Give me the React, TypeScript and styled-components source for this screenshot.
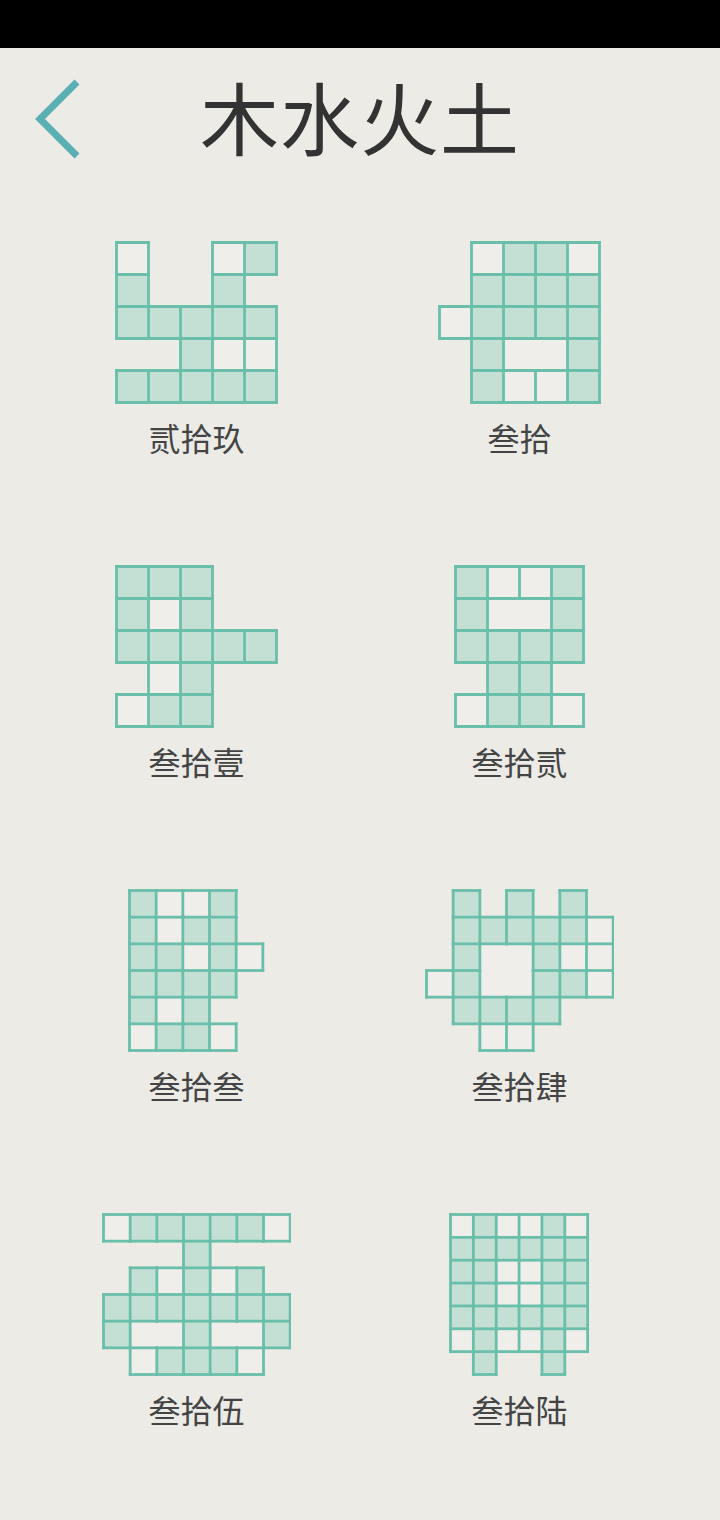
import styled, { createGlobalStyle } from "styled-components";

const GlobalStyle = createGlobalStyle`
  html, body {
    margin: 0;
    padding: 0;
    background: #ecebe6;
  }
  body {
    font-family: "Noto Sans CJK SC", "Noto Sans", sans-serif;
  }
`;

const Page = styled.div`
  width: 720px;
  min-height: 1520px;
  background: #ecebe6;
`;

const StatusBar = styled.div`
  height: 48px;
  background: #000;
`;

const Header = styled.header`
  position: relative;
  height: 144px;
  display: flex;
  align-items: center;
  justify-content: center;
`;

const BackBtn = styled.button`
  position: absolute;
  left: 31px;
  top: 29px;
  width: 60px;
  height: 84px;
  padding: 0;
  background: transparent;
  border: none;
  display: flex;
  align-items: center;
  justify-content: center;
`;

const Title = styled.h1`
  margin: 0 0 10px 0;
  font-size: 79px;
  font-weight: 400;
  letter-spacing: 1px;
  line-height: 1;
  color: #333333;
`;

const PuzzleList = styled.div`
  display: grid;
  grid-template-columns: 323px 323px;
  row-gap: 112px;
  padding: 50px 37px 0 35px;
`;

const Item = styled.div`
  display: flex;
  flex-direction: column;
  align-items: center;
`;

const Board = styled.div`
  height: 162px;
  display: flex;
  align-items: flex-start;
  justify-content: center;
  margin-top: -1px;
`;

const Label = styled.div`
  margin-top: 17px;
  font-size: 32px;
  line-height: 34px;
  color: #444444;
`;

// '.' nothing, '#' filled, 'o' empty, other letters = merged empty group
interface IPuzzle {
  name: string;
  rows: string[];
}

const puzzles: IPuzzle[] = [
  { name: "贰拾玖", rows: ["o..o#", "#..#.", "#####", "..#oo", "#####"] },
  { name: "叁拾", rows: [".o##o", ".####", "o####", ".#aa#", ".#oo#"] },
  { name: "叁拾壹", rows: ["###..", "#o#..", "#####", ".o#..", "o##.."] },
  { name: "叁拾贰", rows: ["#oo#", "#aa#", "####", ".##.", "o##o"] },
  { name: "叁拾叁", rows: ["#oo#.", "#o##.", "##o#o", "####.", "#o#..", "o##o."] },
  { name: "叁拾肆", rows: [".#.#.#.", ".#####o", ".#aa#oo", "o#aa##o", ".####..", "..oo..."] },
  { name: "叁拾伍", rows: ["o#####o", "...#...", ".#o#o#.", "#######", "#aa#bb#", ".o###o."] },
  { name: "叁拾陆", rows: ["o#oo#o", "######", "##oo##", "##oo##", "######", "o#oo#o", ".#..#."] },
];

const STROKE = "#6abfab";
const FILL = "#c4e0d4";
const EMPTY = "#efeeea";

function Grid({ rows }: { rows: string[] }) {
  const n = rows.length;
  const m = Math.max(...rows.map((r) => r.length));
  const cell = 160 / n;
  const pad = 1.5;
  const at = (r: number, c: number) => (r < 0 || r >= n || c < 0 || c >= m ? "." : rows[r][c] || ".");
  const same = (a: string, b: string) => a === b && /[a-np-z]/.test(a);

  const rects: JSX.Element[] = [];
  const lines: JSX.Element[] = [];
  for (let r = 0; r < n; r++) {
    for (let c = 0; c < m; c++) {
      const v = at(r, c);
      if (v === ".") continue;
      const x = pad + c * cell;
      const y = pad + r * cell;
      rects.push(<rect key={`r${r}-${c}`} x={x} y={y} width={cell} height={cell} fill={v === "#" ? FILL : EMPTY} />);
      const sides: [number, number, number, number, number, number][] = [
        [-1, 0, x, y, x + cell, y],
        [1, 0, x, y + cell, x + cell, y + cell],
        [0, -1, x, y, x, y + cell],
        [0, 1, x + cell, y, x + cell, y + cell],
      ];
      sides.forEach(([dr, dc, x1, y1, x2, y2], i) => {
        const nb = at(r + dr, c + dc);
        if (nb !== "." && (dr < 0 || dc < 0)) return;
        if (same(v, nb)) return;
        lines.push(<line key={`l${r}-${c}-${i}`} x1={x1} y1={y1} x2={x2} y2={y2} />);
      });
    }
  }

  return (
    <svg width={m * cell + pad * 2} height={n * cell + pad * 2}>
      {rects}
      <g stroke={STROKE} strokeWidth={2.8} strokeLinecap="square">
        {lines}
      </g>
    </svg>
  );
}

export default function App() {
  return (
    <Page>
      <GlobalStyle />
      <StatusBar />
      <Header>
        <BackBtn aria-label="back">
          <svg width="60" height="84" viewBox="0 0 60 84">
            <polyline points="46,5 9,42 46,79" fill="none" stroke="#5aafb4" strokeWidth="7" />
          </svg>
        </BackBtn>
        <Title>木水火土</Title>
      </Header>
      <PuzzleList>
        {puzzles.map((p) => (
          <Item key={p.name}>
            <Board>
              <Grid rows={p.rows} />
            </Board>
            <Label>{p.name}</Label>
          </Item>
        ))}
      </PuzzleList>
    </Page>
  );
}
